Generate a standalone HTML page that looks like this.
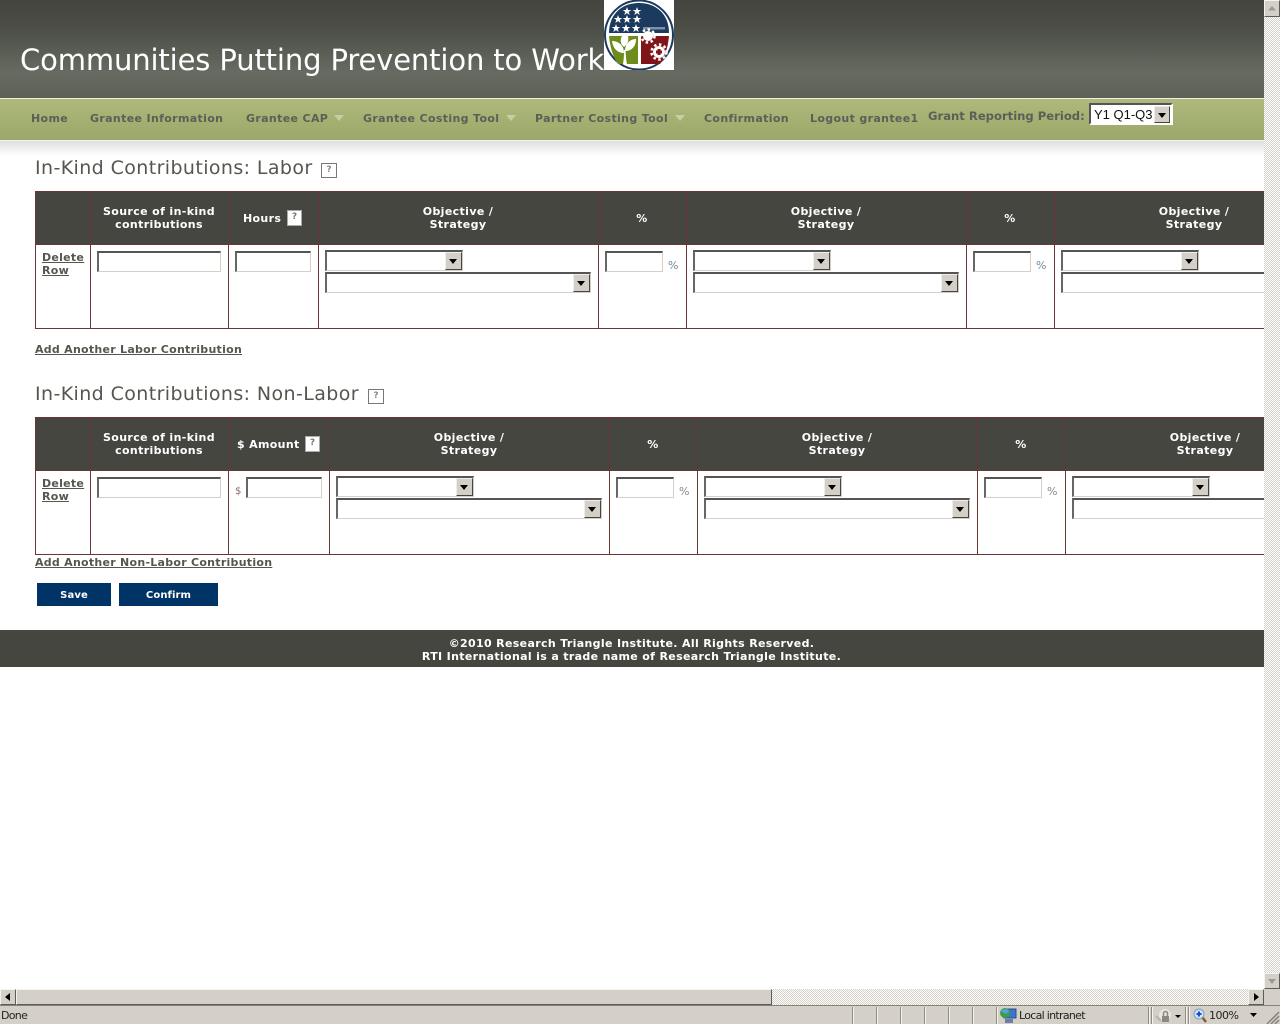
<!DOCTYPE html>
<html><head><meta charset="utf-8"><title>Communities Putting Prevention to Work</title>
<style>
html,body{margin:0;padding:0;width:1280px;height:1024px;overflow:hidden;background:#fff}
body{position:relative;font-family:"DejaVu Sans","Liberation Sans",sans-serif}
.a,.t{position:absolute}
.t{white-space:nowrap;line-height:13px}
#hdr{left:0;top:0;width:1264px;height:98px;background:linear-gradient(#43453e 0,#4a4c45 25px,#666a60 72px,#5d6157 98px)}
#title{left:20px;top:42px;color:#fff;font-size:29px;line-height:36px;letter-spacing:-.13px}
#nav{left:0;top:98px;width:1264px;height:43px;box-sizing:border-box;border-top:1px solid #eef0e4;border-bottom:1px solid #f2f2f2;background:linear-gradient(#aeb97b,#9aa869)}
#shadow{left:0;top:141px;width:1264px;height:15px;background:linear-gradient(#dfdfdf,#fff)}
.n{font-weight:bold;font-size:11px;letter-spacing:.35px;color:#5c5e57;top:112px}
.ar{width:0;height:0;border:5px solid transparent;border-top:6px solid #c6cfa3;border-bottom:0;top:115px}
h2{margin:0;position:absolute;font-weight:normal;font-size:19px;line-height:24px;letter-spacing:.4px;color:#55574f;white-space:nowrap}
.q{position:absolute;box-sizing:border-box;width:16px;height:15px;border:1px solid #777;background:#fff;color:#888;font:bold 9px/13px "DejaVu Sans",sans-serif;text-align:center}
.qw{width:15px;height:16px;border:1px solid #aaa;color:#777}
.hb{background:#44463f;height:53px;left:35px}
.v{width:1px;background:#6b3535}
.h{height:1px;background:#6b3535;left:35px;width:1229px}
.th{color:#fff;font-weight:bold;font-size:11px;letter-spacing:.37px;text-align:center;line-height:13px;white-space:nowrap;transform:translateX(-50%)}
input.i,select.s{position:absolute;box-sizing:border-box;margin:0;padding:0;background:#fff;border-style:solid;border-width:2px 1px 1px 2px;border-color:#555 #d4d0c8 #d4d0c8 #666;border-radius:0;appearance:none;-webkit-appearance:none;outline:0}
input.i{height:21px}
select.s{height:21px}
.b{position:absolute;box-sizing:border-box;width:17px;height:18px;background:#d4d0c8;border:1px solid;border-color:#eee #444 #444 #eee}
.b:after,.bt:after{content:"";position:absolute;left:3px;top:6px;width:0;height:0;border:4px solid transparent;border-top:5px solid #000;border-bottom:0}
.pc{font-size:11px;color:#6b8aa0}
.lnk{color:#55574f;font-weight:bold;font-size:11px;letter-spacing:.27px;text-decoration:underline;line-height:13px}
.btn{position:absolute;background:#003366;color:#fff;font-weight:bold;font-size:10px;letter-spacing:.1px;text-align:center;line-height:25px;height:23px;top:583px}
#foot{left:0;top:630px;width:1264px;height:37px;background:#44463f;color:#fff;font-weight:bold;font-size:11px;letter-spacing:.34px;line-height:12.5px;text-align:center}
.track{background-color:#fff;background-image:repeating-conic-gradient(#d4d0c8 0 25%,#fff 0 50%);background-size:2px 2px}
.sb{position:absolute;box-sizing:border-box;background:#d4d0c8;border:1px solid;border-color:#f4f3ef #5e5c56 #5e5c56 #f4f3ef}
#status{left:0;top:1005px;width:1280px;height:19px;background:#d4d0c8;border-top:1px solid #85827a;box-sizing:border-box}
.sep{position:absolute;top:1px;width:2px;height:18px;box-sizing:border-box;border-left:1px solid #8e8b83;border-right:1px solid #f4f3ef}
.st{font:11px/14px "DejaVu Sans",sans-serif;color:#222;letter-spacing:-.7px}
</style></head><body>
<div class="a" id="hdr"></div>
<div class="a t" id="title">Communities Putting Prevention to Work</div>
<svg class="a" style="left:604px;top:0" width="70" height="70" viewBox="0 0 70 70">
<rect width="70" height="70" fill="#fff"/>
<ellipse cx="35" cy="35" rx="34" ry="34.500" fill="#fff" stroke="#1b3a5e" stroke-width="2"/>
<path d="M5 33C5 14 18 3 35 3s30 11 30 30z" fill="#1b3a5e"/>
<path d="M5 36H34V64H14C9 57 6 47 5 36z" fill="#6e8c1c"/>
<path d="M37 36H65C64 47 61 57 56 64H37z" fill="#7f1419"/>
<g fill="#fff">
<path d="M0-4l1.100 3h3.200l-2.600 1.900 1 3.100L0 2.100-2.700 4l1-3.100L-4.300-1h3.200z" transform="translate(23 11)"/>
<path d="M0-4l1.100 3h3.200l-2.600 1.900 1 3.100L0 2.100-2.700 4l1-3.100L-4.300-1h3.200z" transform="translate(33 11)"/>
<path d="M0-4l1.100 3h3.200l-2.600 1.900 1 3.100L0 2.100-2.700 4l1-3.100L-4.300-1h3.200z" transform="translate(14 19)"/>
<path d="M0-4l1.100 3h3.200l-2.600 1.900 1 3.100L0 2.100-2.700 4l1-3.100L-4.300-1h3.200z" transform="translate(23 19)"/>
<path d="M0-4l1.100 3h3.200l-2.600 1.900 1 3.100L0 2.100-2.700 4l1-3.100L-4.300-1h3.200z" transform="translate(33 19)"/>
<path d="M0-4l1.100 3h3.200l-2.600 1.900 1 3.100L0 2.100-2.700 4l1-3.100L-4.300-1h3.200z" transform="translate(12 28)"/>
<path d="M0-4l1.100 3h3.200l-2.600 1.900 1 3.100L0 2.100-2.700 4l1-3.100L-4.300-1h3.200z" transform="translate(22 28)"/>
<path d="M0-4l1.100 3h3.200l-2.600 1.900 1 3.100L0 2.100-2.700 4l1-3.100L-4.300-1h3.200z" transform="translate(32 28)"/>
<rect x="39" y="27" width="22" height="2.500" fill="#7f90a6"/>
<path d="M19 64C20 58 20 55 20 50L21.500 50C22 56 22 60 23 64z"/>
<path d="M20 53C14 53 9 49 8 41 14 41 20 45 20 53z"/>
<path d="M21 51C27 51 32 47 32 39 26 39 21 44 21 51z"/>
<path d="M20 47C16 44 16 39 18 36L24 36C25 40 24 44 20 47z"/>
<circle cx="44" cy="36" r="5"/>
<circle cx="44" cy="36" r="6.500" fill="none" stroke="#fff" stroke-width="2.500" stroke-dasharray="2.500 2.500"/>
<circle cx="55" cy="52" r="6"/>
<circle cx="55" cy="52" r="7.500" fill="none" stroke="#fff" stroke-width="2.500" stroke-dasharray="2.500 2.500"/>
<path d="M53.500 49h3v1.500H58v3h-1.500V55h-3v-1.500H52v-3h1.500z" fill="#7f1419"/>
<rect x="37" y="33" width="28" height="3" fill="#fff"/>
</g>
</svg>
<div class="a" id="nav"></div>
<div class="a" id="shadow"></div>
<div class="t n a" style="left:31px">Home</div>
<div class="t n a" style="left:90px">Grantee Information</div>
<div class="t n a" style="left:246px">Grantee CAP</div><div class="a ar" style="left:334px"></div>
<div class="t n a" style="left:363px">Grantee Costing Tool</div><div class="a ar" style="left:506px"></div>
<div class="t n a" style="left:535px">Partner Costing Tool</div><div class="a ar" style="left:675px"></div>
<div class="t n a" style="left:704px">Confirmation</div>
<div class="t n a" style="left:810px">Logout grantee1</div>
<div class="t n a" style="left:928px;top:110px;font-size:11.6px;letter-spacing:0">Grant Reporting Period:</div>
<div class="a" style="left:1089px;top:103px;width:84px;height:22px;box-sizing:border-box;background:#fff;border:2px solid;border-color:#555 #fff #fff #555;outline:0">
<div class="t" style="left:3px;top:2px;font:13px/15px 'Liberation Sans',sans-serif;color:#111">Y1 Q1-Q3</div>
<div class="b" style="left:63px;top:1px;height:17px;width:16px"></div>
</div>

<h2 style="left:35px;top:156px">In-Kind Contributions: Labor</h2>
<div class="q" style="left:321px;top:163px">?</div>

<!-- table 1 -->
<div class="a hb" style="top:191px;width:1229px"></div>
<div class="a h" style="top:191px"></div><div class="a h" style="top:244px"></div><div class="a h" style="top:328px"></div>
<div class="a v" style="left:35px;top:191px;height:138px"></div>
<div class="a v" style="left:90px;top:191px;height:138px"></div>
<div class="a v" style="left:228px;top:191px;height:138px"></div>
<div class="a v" style="left:318px;top:191px;height:138px"></div>
<div class="a v" style="left:598px;top:191px;height:138px"></div>
<div class="a v" style="left:686px;top:191px;height:138px"></div>
<div class="a v" style="left:966px;top:191px;height:138px"></div>
<div class="a v" style="left:1054px;top:191px;height:138px"></div>
<div class="a th" style="left:159px;top:205px">Source of in-kind<br>contributions</div>
<div class="a t" style="left:243px;top:212px;color:#fff;font-weight:bold;font-size:11px;letter-spacing:.33px">Hours</div>
<div class="q qw" style="left:287px;top:210px">?</div>
<div class="a th" style="left:458px;top:205px">Objective /<br>Strategy</div>
<div class="a th" style="left:642px;top:212px">%</div>
<div class="a th" style="left:826px;top:205px">Objective /<br>Strategy</div>
<div class="a th" style="left:1010px;top:212px">%</div>
<div class="a th" style="left:1194px;top:205px">Objective /<br>Strategy</div>
<a class="a lnk" style="left:42px;top:251px">Delete<br>Row</a>
<input class="i" style="left:97px;top:251px;width:124px">
<input class="i" style="left:235px;top:251px;width:76px">
<select class="s" style="left:325px;top:250px;width:138px"></select><div class="b" style="left:445px;top:252px"></div>
<select class="s" style="left:325px;top:272px;width:266px"></select><div class="b" style="left:573px;top:274px"></div>
<input class="i" style="left:605px;top:251px;width:58px"><div class="a t pc" style="left:668px;top:259px">%</div>
<select class="s" style="left:693px;top:250px;width:138px"></select><div class="b" style="left:813px;top:252px"></div>
<select class="s" style="left:693px;top:272px;width:266px"></select><div class="b" style="left:941px;top:274px"></div>
<input class="i" style="left:973px;top:251px;width:58px"><div class="a t pc" style="left:1036px;top:259px">%</div>
<select class="s" style="left:1061px;top:250px;width:138px"></select><div class="b" style="left:1181px;top:252px"></div>
<select class="s" style="left:1061px;top:272px;width:203px;border-right:0"></select>
<a class="a lnk" style="left:35px;top:343px;white-space:nowrap">Add Another Labor Contribution</a>

<h2 style="left:35px;top:382px">In-Kind Contributions: Non-Labor</h2>
<div class="q" style="left:368px;top:389px">?</div>

<!-- table 2 -->
<div class="a hb" style="top:417px;width:1229px"></div>
<div class="a h" style="top:417px"></div><div class="a h" style="top:470px"></div><div class="a h" style="top:554px"></div>
<div class="a v" style="left:35px;top:417px;height:138px"></div>
<div class="a v" style="left:90px;top:417px;height:138px"></div>
<div class="a v" style="left:228px;top:417px;height:138px"></div>
<div class="a v" style="left:329px;top:417px;height:138px"></div>
<div class="a v" style="left:609px;top:417px;height:138px"></div>
<div class="a v" style="left:697px;top:417px;height:138px"></div>
<div class="a v" style="left:977px;top:417px;height:138px"></div>
<div class="a v" style="left:1065px;top:417px;height:138px"></div>
<div class="a th" style="left:159px;top:431px">Source of in-kind<br>contributions</div>
<div class="a t" style="left:237px;top:438px;color:#fff;font-weight:bold;font-size:11px;letter-spacing:.33px">$ Amount</div>
<div class="q qw" style="left:305px;top:436px">?</div>
<div class="a th" style="left:469px;top:431px">Objective /<br>Strategy</div>
<div class="a th" style="left:653px;top:438px">%</div>
<div class="a th" style="left:837px;top:431px">Objective /<br>Strategy</div>
<div class="a th" style="left:1021px;top:438px">%</div>
<div class="a th" style="left:1205px;top:431px">Objective /<br>Strategy</div>
<a class="a lnk" style="left:42px;top:477px">Delete<br>Row</a>
<input class="i" style="left:97px;top:477px;width:124px">
<div class="a t" style="left:235px;top:485px;font-size:10px;color:#8a6a6a">$</div>
<input class="i" style="left:246px;top:477px;width:76px">
<select class="s" style="left:336px;top:476px;width:138px"></select><div class="b" style="left:456px;top:478px"></div>
<select class="s" style="left:336px;top:498px;width:266px"></select><div class="b" style="left:584px;top:500px"></div>
<input class="i" style="left:616px;top:477px;width:58px"><div class="a t pc" style="left:679px;top:485px;color:#888">%</div>
<select class="s" style="left:704px;top:476px;width:138px"></select><div class="b" style="left:824px;top:478px"></div>
<select class="s" style="left:704px;top:498px;width:266px"></select><div class="b" style="left:952px;top:500px"></div>
<input class="i" style="left:984px;top:477px;width:58px"><div class="a t pc" style="left:1047px;top:485px;color:#888">%</div>
<select class="s" style="left:1072px;top:476px;width:138px"></select><div class="b" style="left:1192px;top:478px"></div>
<select class="s" style="left:1072px;top:498px;width:192px;border-right:0"></select>
<a class="a lnk" style="left:35px;top:556px;white-space:nowrap">Add Another Non-Labor Contribution</a>

<div class="btn" style="left:37px;width:74px">Save</div>
<div class="btn" style="left:119px;width:99px">Confirm</div>

<div class="a" id="foot"><div style="position:absolute;left:0;width:1263px;top:8px">©2010 Research Triangle Institute. All Rights Reserved.<br>RTI International is a trade name of Research Triangle Institute.</div></div>

<!-- scrollbars -->
<div class="a track" style="left:1264px;top:0;width:16px;height:989px"></div>
<div class="sb" style="left:1264px;top:0;width:16px;height:17px"><svg width="14" height="15" style="display:block"><path d="M3 9.500h8L7 5z" fill="#9a9a94"/></svg></div>
<div class="sb" style="left:1264px;top:973px;width:16px;height:16px"><svg width="14" height="14" style="display:block"><path d="M3 5h8L7 10z" fill="#9a9a94"/></svg></div>
<div class="a" style="left:0;top:989px;width:1264px;height:16px;background:#d4d0c8"></div>
<div class="a track" style="left:772px;top:989px;width:476px;height:16px"></div>
<div class="sb" style="left:0;top:989px;width:16px;height:16px"><svg width="14" height="14" style="display:block"><path d="M9 3v8L4 7z" fill="#000"/></svg></div>
<div class="sb" style="left:16px;top:989px;width:756px;height:16px"></div>
<div class="sb" style="left:1248px;top:989px;width:16px;height:16px"><svg width="14" height="14" style="display:block"><path d="M5 3v8l5-4z" fill="#000"/></svg></div>
<div class="a" style="left:1264px;top:989px;width:16px;height:16px;background:#d4d0c8"></div>

<!-- status bar -->
<div class="a" id="status">
<div class="a t st" style="left:1px;top:3px">Done</div>
<div class="sep" style="left:852px"></div><div class="sep" style="left:876px"></div><div class="sep" style="left:900px"></div><div class="sep" style="left:924px"></div><div class="sep" style="left:948px"></div><div class="sep" style="left:972px"></div><div class="sep" style="left:996px"></div><div class="sep" style="left:1148px"></div><div class="sep" style="left:1151px"></div><div class="sep" style="left:1185px"></div><div class="sep" style="left:1188px"></div>
<svg class="a" style="left:999px;top:1px" width="18" height="18" viewBox="0 0 18 18"><rect x="5" y="2" width="12" height="9" fill="#3f74c9" stroke="#2c4f8a"/><circle cx="6" cy="6" r="5" fill="#3c9e4c"/><path d="M2 4c3-3 6-2 8 0l-3 3z" fill="#5aa0e8"/><rect x="6" y="12" width="8" height="4" fill="#6c7fa6"/></svg>
<div class="a t st" style="left:1019px;top:3px">Local intranet</div>
<svg class="a" style="left:1155px;top:1px" width="30" height="18" viewBox="0 0 30 18"><path d="M1 9l4 4 5-9" fill="none" stroke="#b5b2aa" stroke-width="2"/><circle cx="10" cy="8" r="6" fill="#e8e6e0"/><rect x="7" y="9" width="7" height="6" fill="#8b8980"/><path d="M8.500 9V6.500a2 2 0 0 1 4 0V9" fill="none" stroke="#8b8980" stroke-width="1.500"/><path d="M20 8h6l-3 3z" fill="#000"/></svg>
<svg class="a" style="left:1193px;top:1px" width="15" height="18" viewBox="0 0 15 18"><line x1="9" y1="10" x2="13" y2="15" stroke="#8a5a30" stroke-width="2.500"/><circle cx="6" cy="7" r="5" fill="#cfe2f7" stroke="#7c9cc4"/><path d="M3.500 7h5M6 4.500v5" stroke="#1a4fb5" stroke-width="2"/></svg>
<div class="a t st" style="left:1209px;top:3px;letter-spacing:-.5px">100%</div>
<svg class="a" style="left:1250px;top:7px" width="8" height="5"><path d="M0 0h7L3.500 4z" fill="#000"/></svg>
<svg class="a" style="left:1266px;top:4px" width="14" height="15"><path d="M13 2L1 14M13 6L5 14M13 10l-4 4" stroke="#85827a" stroke-width="1.500"/></svg>
</div>
</body></html>
